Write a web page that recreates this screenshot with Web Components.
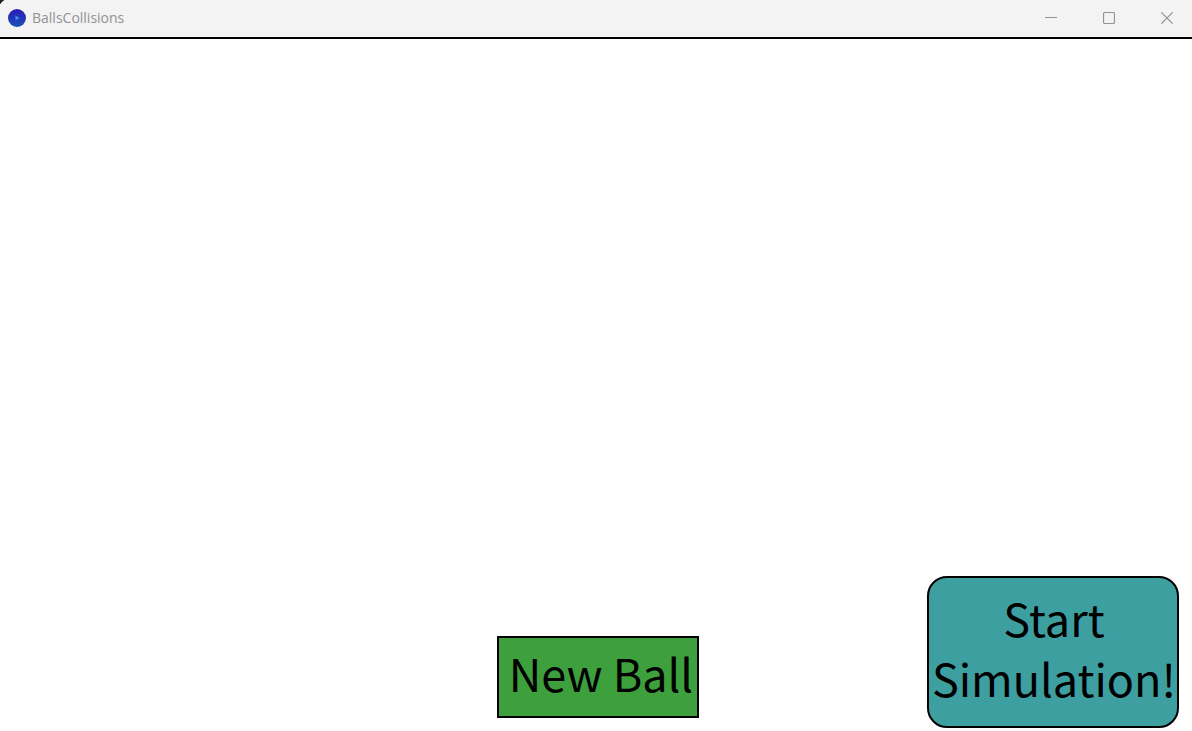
<!DOCTYPE html>
<html lang="en">
<head>
<meta charset="utf-8">
<title>BallsCollisions</title>
<style>
html { background: #fff; }
body { margin: 0; }
</style>
</head>
<body>
<app-window>
  <title-bar slot="title">BallsCollisions</title-bar>
  <sketch-button slot="center" kind="new">New Ball</sketch-button>
  <sketch-button slot="end" kind="start">Start Simulation!</sketch-button>
</app-window>

<template id="window-template">
  <style>
    :host { display: flex; flex-direction: column; min-height: 100vh; background: #fff; }
    main { flex: 1; display: flex; flex-direction: column; justify-content: flex-end; border-top: 2px solid #000; }
    .controls { display: grid; grid-template-columns: 1fr auto 1fr; align-items: end; padding: 0 13px 3px 17px; }
    .center { grid-column: 2; padding-bottom: 10px; }
    .end { grid-column: 3; justify-self: end; }
  </style>
  <slot name="title"></slot>
  <main>
    <div class="controls">
      <div class="center"><slot name="center"></slot></div>
      <div class="end"><slot name="end"></slot></div>
    </div>
  </main>
</template>

<template id="title-template">
  <style>
    :host { display: block; color: #929292; font: 14px/20px "Open Sans", "Noto Sans", sans-serif;
      background: radial-gradient(circle at 8px 8px, transparent 8px, #222 9px) 0 0 / 4px 4px no-repeat, #f3f3f3; }
    header { display: flex; align-items: center; height: 36px; padding-bottom: 1px; }
    .logo { width: 18px; height: 18px; margin: 0 6px 0 8px; }
    .name { flex: 1; margin: 0; font: inherit; }
    button { width: 58px; height: 36px; padding: 0; border: 0; background: none; color: inherit; display: grid; place-items: center; }
    nav { display: flex; margin-right: -4px; overflow: hidden; }
    svg { display: block; }
  </style>
  <header>
    <svg class="logo" viewBox="0 0 18 18" aria-hidden="true">
      <defs><linearGradient id="g" x1="0" y1="0" x2="0" y2="1"><stop offset="0" stop-color="#291bb4"/><stop offset="1" stop-color="#1b50ba"/></linearGradient></defs>
      <circle cx="9" cy="9" r="9" fill="url(#g)"/>
      <path d="M7.5 6.5L11.5 9L7.5 11.5Z" fill="#3e92e8"/>
    </svg>
    <h1 class="name"><slot></slot></h1>
    <nav aria-label="Window">
      <button type="button" aria-label="Minimize"><svg width="12" height="12" fill="none" stroke="currentColor"><path d="M0 5.5H12"/></svg></button>
      <button type="button" aria-label="Maximize"><svg width="12" height="12" fill="none" stroke="currentColor"><rect x=".5" y=".5" width="11" height="11" rx="1.5" stroke-width="1.2"/></svg></button>
      <button type="button" aria-label="Close"><svg width="12" height="12" fill="none" stroke="currentColor"><path d="M.3 .3L11.7 11.7M11.7 .3L.3 11.7" stroke-width="1.2"/></svg></button>
    </nav>
  </header>
</template>

<template id="button-template">
  <style>
    :host { display: block; }
    button { display: block; box-sizing: border-box; margin: 0; border: 2px solid #000; color: #000;
      font: 45px/60px "Noto Sans CJK JP", "Noto Sans CJK SC", sans-serif; text-align: center; }
    :host([kind="new"]) button { width: 202px; height: 82px; padding: 0 0 8px 6px; background: #3da03d; white-space: nowrap; }
    :host([kind="start"]) button { width: 252px; height: 152px; padding: 0 0 8px 2px; border-radius: 20px; background: #3d9f9f; }
  </style>
  <button type="button"><slot></slot></button>
</template>

<script>
const define = (name, templateId) => customElements.define(name, class extends HTMLElement {
  constructor() {
    super();
    this.attachShadow({ mode: "open" }).append(document.getElementById(templateId).content.cloneNode(true));
  }
});
define("app-window", "window-template");
define("title-bar", "title-template");
define("sketch-button", "button-template");
</script>
</body>
</html>
